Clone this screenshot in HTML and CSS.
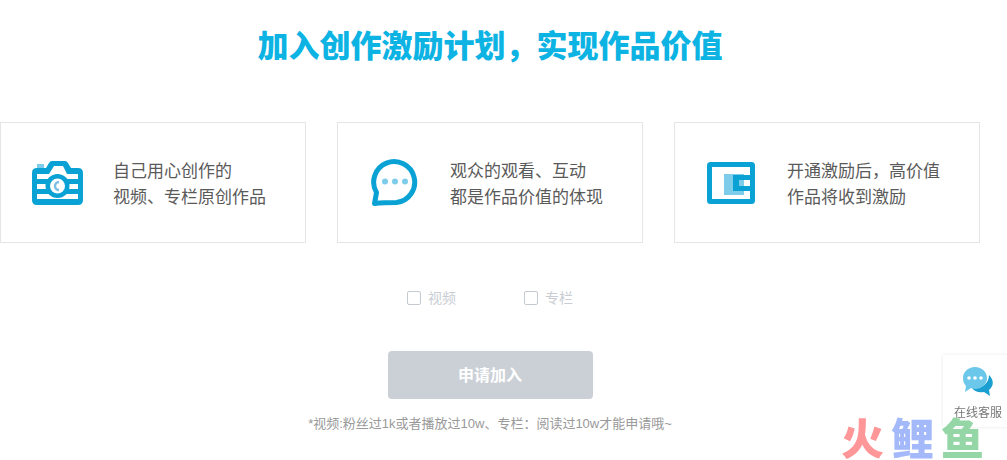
FILE: index.html
```html
<!DOCTYPE html>
<html lang="zh-CN">
<head>
<meta charset="utf-8">
<meta name="viewport" content="width=device-width, initial-scale=1">
<title>创作激励计划</title>
<link rel="stylesheet" href="styles.css">
</head>
<body>
<main class="plan">
  <h1 class="plan-title">加入创作激励计划，实现作品价值</h1>

  <section class="cards">
    <article class="card">
      <svg class="card-icon" viewBox="0 0 54 50" aria-hidden="true">
        <path d="M6 5h7v6H6z" fill="#7dcdea"/>
        <path d="M6 9h9l3-5q1-2 3-2h13q2 0 3 2l3 5h7q5 0 5 5v27q0 5-5 5H6q-5 0-5-5V14q0-5 5-5z" fill="#0aa2d5"/>
        <path d="M6 15h12l5-8h9l4 8h11v5H6zM6 25h41v5H6zM6 35h41v5H6z" fill="#fff"/>
        <circle cx="26.500" cy="27" r="12" fill="#0aa2d5"/>
        <circle cx="26.500" cy="27" r="7.500" fill="#fff"/>
        <path d="M28 23a4 4 0 1 0 0 8" fill="none" stroke="#7dbfe6" stroke-width="2.500"/>
      </svg>
      <p class="card-text">自己用心创作的<br>视频、专栏原创作品</p>
    </article>
    <article class="card">
      <svg class="card-icon" viewBox="0 0 54 50" aria-hidden="true">
        <path d="M6 43.500l2-11A20.500 20.500 0 1 1 28 42.500Q15 42.500 6 43.500z" transform="translate(0.500 1)" fill="#fff" stroke="#0aa2d5" stroke-width="5" stroke-linejoin="round"/>
        <g fill="#7dcdea"><circle cx="17" cy="22.500" r="3"/><circle cx="27" cy="22.500" r="3"/><circle cx="37" cy="22.500" r="3"/></g>
      </svg>
      <p class="card-text">观众的观看、互动<br>都是作品价值的体现</p>
    </article>
    <article class="card">
      <svg class="card-icon" viewBox="0 0 54 50" aria-hidden="true">
        <rect x="4.500" y="5.500" width="43" height="37" rx="1" fill="#fff" stroke="#0aa2d5" stroke-width="5" stroke-linejoin="round"/>
        <path d="M19 15h20v21H19z" fill="#7dcdea"/>
        <path d="M28 16h18v5h-8v6h8v5H28z" fill="#0aa2d5"/>
        <path d="M34 21h10v6H34z" fill="#fff"/>
        <path d="M34 21h5v6h-5z" fill="#7dcdea"/>
      </svg>
      <p class="card-text">开通激励后，高价值<br>作品将收到激励</p>
    </article>
  </section>

  <form class="apply">
    <div class="options">
      <label class="option"><input class="option-box" type="checkbox" name="video">视频</label>
      <label class="option"><input class="option-box" type="checkbox" name="column">专栏</label>
    </div>
    <button class="apply-button" type="button">申请加入</button>
    <p class="note">*视频:粉丝过1k或者播放过10w、专栏：阅读过10w才能申请哦~</p>
  </form>
</main>

<button class="service" type="button">
  <svg class="service-icon" viewBox="0 0 32 32" aria-hidden="true">
    <path d="M27 9c6 6 4 12 0 15l1 6-6-4c-6 1-10-1-12-4 9 1 17-4 17-13z" fill="#1b9fd0"/>
    <path d="M13 1c7 0 12 5 12 11s-5 11-12 11q-2 0-4-1l-6 4 1-6C2 18 1 15 1 12 1 6 6 1 13 1z" fill="#6cc8ea"/>
    <g fill="#fff"><circle cx="7" cy="12" r="1.800"/><circle cx="13" cy="12" r="1.800"/><circle cx="19" cy="12" r="1.800"/></g>
  </svg>
  <span>在线客服</span>
</button>

<div class="watermark"><span class="mark-red">火</span><span class="mark-blue">鲤</span><span class="mark-green">鱼</span></div>
</body>
</html>
```
FILE: styles.css
```css
* {
  box-sizing: border-box;
}

body {
  margin: 0;
  background: #fff;
  color: #5a5a5a;
  font-family: "Liberation Sans", "Noto Sans CJK SC", sans-serif;
}

.plan {
  padding: 22px 27px 0 0;
}

.plan-title {
  margin: 0;
  color: #0cb3e3;
  font-family: "Noto Sans CJK SC", sans-serif;
  font-size: 31px;
  font-weight: 900;
  line-height: 44px;
  text-align: center;
}

.cards {
  display: grid;
  grid-template-columns: repeat(3, 1fr);
  gap: 31px;
  margin-top: 56px;
}

.card {
  display: flex;
  align-items: center;
  gap: 28px;
  padding: 34px 30px 33px;
  border: 1px solid #e5e5e5;
}

.card-icon {
  flex: none;
  align-self: flex-end;
  width: 54px;
  height: 50px;
}

.card-text {
  margin: 0;
  font-family: "Noto Sans CJK SC", sans-serif;
  font-size: 17px;
  font-weight: 400;
  line-height: 26px;
  white-space: nowrap;
}

.apply {
  display: flex;
  flex-direction: column;
  align-items: center;
}

.options {
  display: flex;
  gap: 68px;
  margin-top: 45px;
}

.option {
  display: flex;
  align-items: center;
  gap: 7px;
  color: #c9cdd3;
  font-size: 14px;
  line-height: 20px;
}

.option-box {
  appearance: none;
  width: 14px;
  height: 14px;
  margin: 0;
  border: 1px solid #c5cad1;
  border-radius: 2px;
  background: #fff;
}

.option-box:checked {
  background: #0cb3e3;
}

.apply-button {
  width: 205px;
  height: 48px;
  margin-top: 43px;
  padding: 0 0 2px;
  border: 0;
  border-radius: 4px;
  background: #cbd0d7;
  color: #fff;
  font-family: "Noto Sans CJK SC", sans-serif;
  font-size: 16px;
  font-weight: 700;
}

.note {
  margin: 15px 0 0;
  color: #999;
  font-size: 13px;
  line-height: 20px;
}

.service {
  position: fixed;
  right: 0;
  bottom: 33px;
  z-index: 1;
  display: flex;
  flex-direction: column;
  align-items: center;
  gap: 5px;
  width: 64px;
  padding: 11px 0 6px 6px;
  border: 0;
  background: #fff;
  box-shadow: 0 0 3px rgba(0, 0, 0, 0.1);
  color: #777;
  font-family: "Noto Sans CJK SC", sans-serif;
  font-size: 12px;
  line-height: 18px;
  white-space: nowrap;
}

.service-icon {
  width: 32px;
  height: 32px;
}

.watermark {
  position: fixed;
  right: 23px;
  bottom: 2px;
  z-index: 2;
  display: flex;
  gap: 7px;
  font-family: "Noto Sans CJK SC", sans-serif;
  font-size: 43px;
  font-weight: 900;
  line-height: 44px;
  pointer-events: none;
}

.mark-red {
  color: #ff9799;
}

.mark-blue {
  color: #a3b9fa;
}

.mark-green {
  color: #95d6a6;
}
```
